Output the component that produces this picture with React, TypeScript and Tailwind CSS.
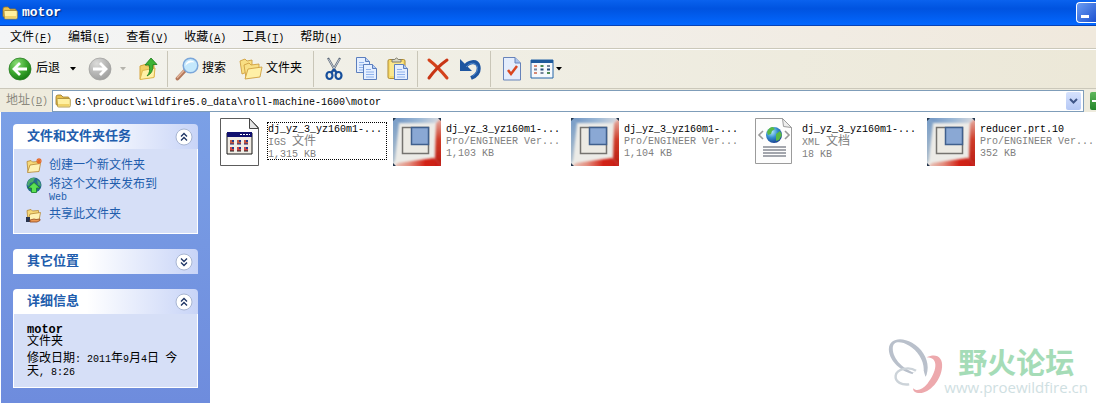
import { useId, type ReactNode } from "react";

type IconProps = { className?: string };

const menus = [
  { label: "文件", key: "F" },
  { label: "编辑", key: "E" },
  { label: "查看", key: "V" },
  { label: "收藏", key: "A" },
  { label: "工具", key: "T" },
  { label: "帮助", key: "H" },
];

const files = [
  { name: "dj_yz_3_yz160m1-...", type: "IGS 文件", size: "1,315 KB", icon: IgsIcon, focused: true },
  { name: "dj_yz_3_yz160m1-...", type: "Pro/ENGINEER Ver...", size: "1,103 KB", icon: ProeIcon },
  { name: "dj_yz_3_yz160m1-...", type: "Pro/ENGINEER Ver...", size: "1,104 KB", icon: ProeIcon },
  { name: "dj_yz_3_yz160m1-...", type: "XML 文档", size: "18 KB", icon: XmlIcon },
  { name: "reducer.prt.10", type: "Pro/ENGINEER Ver...", size: "352 KB", icon: ProeIcon },
];

const tasks = [
  { label: "创建一个新文件夹", icon: NewFolderIcon },
  { label: "将这个文件夹发布到 Web", icon: PublishIcon },
  { label: "共享此文件夹", icon: ShareIcon },
];

/* Half-width latin, full-width chinese */
function Mixed({ text }: { text: string }) {
  return (
    <>
      {text.split(/([\u4e00-\u9fff]+)/).map((part, i) =>
        i % 2 ? <span key={i} className="text-[12px] leading-none">{part}</span> : part
      )}
    </>
  );
}

function FolderIcon({ className }: IconProps) {
  return (
    <svg viewBox="0 0 16 16" className={className}>
      <path d="M1 4q0-2 2-2h3l2 2h5q1 0 1 1v7H2q-1 0-1-1z" fill="#e9c04c" stroke="#98762a" strokeWidth=".8" />
      <path d="M2 6.500q0-1 1-1h11q1.300 0 1.300 1v6q0 1.500-1 1.500H3.500q-1 0-1-1z" fill="#fff0a0" stroke="#a58631" strokeWidth=".8" />
      <path d="M3 11h11.500v2H3z" fill="#f0d268" />
    </svg>
  );
}

function OpenFolder() {
  return (
    <>
      <path d="M1 3.500l4-1 1.500 1.500 6-.500v9L2 14z" fill="#f6d878" stroke="#b58632" strokeWidth=".8" />
      <path d="M1.500 14.500L4 7l10.500-1.500-1.500 8z" fill="#fff2b4" stroke="#b58632" strokeWidth=".8" />
    </>
  );
}

function NewFolderIcon() {
  return (
    <svg viewBox="0 0 16 16" className="size-4 shrink-0">
      <OpenFolder />
      <path d="M13 0v6M10 3h6M11 1l4 4m0-4l-4 4" stroke="#e66a27" strokeWidth="1.200" />
    </svg>
  );
}

function PublishIcon() {
  return (
    <svg viewBox="0 0 16 16" className="size-4 shrink-0">
      <circle cx="8" cy="8" r="7.500" fill="#276a8c" />
      <path d="M2 4q3-4 7-3l-2 4-3 1-1 3-2-1zM11 3l3 2 1 4-3-1z" fill="#4ba96c" />
      <path d="M8 5.500l6 5.500h-3.500v4.500h-5V11H2z" fill="#5ce052" stroke="#168226" strokeWidth=".8" />
    </svg>
  );
}

function ShareIcon() {
  return (
    <svg viewBox="0 0 16 16" className="size-4 shrink-0">
      <OpenFolder />
      <path d="M0 10h4v5H0z" fill="#28344e" />
      <path d="M4 13l4-1 2 .500 4-.500v1.500l-3 1.500H4z" fill="#eb9a55" stroke="#8f481e" strokeWidth=".8" />
    </svg>
  );
}

function ArrowCircle({ back = false }: { back?: boolean }) {
  const id = useId();
  return (
    <svg viewBox="0 0 24 24" className="size-6">
      <defs>
        <radialGradient id={id} cx=".35" cy=".25" r=".85">
          <stop offset="0" stopColor={back ? "#8bdd75" : "#dcdcda"} />
          <stop offset=".55" stopColor={back ? "#3aa52d" : "#b5b5b4"} />
          <stop offset="1" stopColor={back ? "#117410" : "#9a9a99"} />
        </radialGradient>
      </defs>
      <circle cx="12" cy="12" r="11" fill={`url(#${id})`} stroke={back ? "#2b7d25" : "#a3a3a1"} strokeWidth=".8" />
      <path d={back ? "M19 12H7m5-6l-6 6 6 6" : "M5 12h12m-5-6l6 6-6 6"} fill="none" stroke="#fff" strokeWidth="2.800" />
    </svg>
  );
}

function Caret({ className = "text-black" }: IconProps) {
  return (
    <svg viewBox="0 0 6 4" className={`h-1 w-1.5 shrink-0 ${className}`}>
      <path d="M0 0h6L3 3.500z" fill="currentColor" />
    </svg>
  );
}

function UpIcon() {
  return (
    <svg viewBox="0 0 20 24" className="h-6 w-5">
      <path d="M2 9l5-1.500 2 1.500 7-1v12L2 22z" fill="#f3cf65" stroke="#d6a53c" />
      <path d="M2 22.500l2.500-9L17 11l-1 9.500z" fill="#fff1a5" stroke="#dfb64c" />
      <path d="M9 19q4-4 2-11H7l6-7 6 6.500h-4Q15.500 16 9 19z" fill="#3db335" stroke="#197a1b" strokeWidth=".8" />
    </svg>
  );
}

function SearchIcon() {
  return (
    <svg viewBox="0 0 24 24" className="size-6">
      <path d="M2.500 21.500l7.500-8" stroke="#b3775a" strokeWidth="3.800" strokeLinecap="round" />
      <path d="M2 21l7-7.500" stroke="#e6b79c" strokeWidth="1.300" />
      <circle cx="15.500" cy="8.500" r="7.300" fill="#c4e8fc" stroke="#7ba6d9" strokeWidth="1.500" />
      <path d="M10.500 9q0-5 5-5.500 3 0 4 2-6-1-9 3.500z" fill="#fff" />
    </svg>
  );
}

function FoldersIcon() {
  return (
    <svg viewBox="0 0 24 24" className="size-6" stroke="#cf9f3f" strokeWidth=".9">
      <path d="M1 4l5-2 2 2 5-1v10L3 17z" fill="#f9df83" />
      <path d="M5 8l5-2 2 2 8-1v12L7 21z" fill="#f9e086" />
      <path d="M6 22l3-10 14-2-2 10z" fill="#fff0a6" />
    </svg>
  );
}

function CutIcon() {
  return (
    <svg viewBox="0 0 20 24" className="h-6 w-5" fill="none">
      <path d="M4 1l8 14M16 1L8 15" stroke="#5b6778" strokeWidth="2.200" />
      <path d="M4.500 2l7 12M15.500 2l-7 12" stroke="#dfe4eb" strokeWidth=".8" />
      <ellipse cx="5.500" cy="18.500" rx="3" ry="3.500" stroke="#174f9c" strokeWidth="2.200" />
      <ellipse cx="14.500" cy="18.500" rx="3" ry="3.500" stroke="#174f9c" strokeWidth="2.200" />
      <path d="M7.500 15.500l2.500-3 2.500 3" stroke="#174f9c" strokeWidth="2" />
    </svg>
  );
}

function Sheet({ x, y }: { x: number; y: number }) {
  return (
    <g transform={`translate(${x} ${y})`}>
      <path d="M.5.5h9l4 4v11H.5z" fill="#e5efff" stroke="#5c7fbe" />
      <path d="M9.500.5v4h4" fill="#b7cdf2" stroke="#5c7fbe" />
      <path d="M3 5.500h5M3 8h8M3 10.500h8M3 13h8" stroke="#8fb2ec" />
    </g>
  );
}

function CopyIcon() {
  return (
    <svg viewBox="0 0 24 24" className="size-6">
      <Sheet x={1} y={0} />
      <Sheet x={8} y={7} />
    </svg>
  );
}

function PasteIcon() {
  return (
    <svg viewBox="0 0 24 24" className="size-6">
      <rect x="2" y="2.500" width="17" height="19" rx="1.500" fill="#f6d96a" stroke="#ae8b32" />
      <path d="M4 5h13v14H4z" fill="#fae78f" />
      <path d="M6 5V2.500h2.500q2-3 4 0H15V5z" fill="#d9d9ca" stroke="#7e7b69" />
      <Sheet x={8} y={7} />
    </svg>
  );
}

function DeleteIcon() {
  return (
    <svg viewBox="0 0 24 24" className="size-6" fill="none" strokeLinecap="round">
      <path d="M3 3q9 7 18 18" stroke="#d4421b" strokeWidth="3" />
      <path d="M21 3Q11 10 3 21" stroke="#c83515" strokeWidth="3" />
    </svg>
  );
}

function UndoIcon() {
  return (
    <svg viewBox="0 0 24 24" className="size-6" fill="none">
      <path d="M6 11C10 4 19 3 20.500 9.500 21.500 15 18 19 13 21" stroke="#1d55a0" strokeWidth="4" />
      <path d="M2 2v12h12l-4-4-4-4z" fill="#1d55a0" />
      <path d="M8 10c4-5 10-5 11.500 0 .5 4-1.500 7-5 9" stroke="#4f87cc" strokeWidth="1" />
    </svg>
  );
}

function PropertiesIcon() {
  return (
    <svg viewBox="0 0 20 24" className="h-6 w-5">
      <path d="M1.500.5H13l5.500 5.500v17h-17z" fill="#e4edfc" stroke="#6783ba" />
      <path d="M13 .5V6h5.500" fill="#a9c1eb" stroke="#6783ba" />
      <path d="M6 13l3 4 6-8" fill="none" stroke="#d94720" strokeWidth="2.500" />
    </svg>
  );
}

function ViewsIcon() {
  return (
    <svg viewBox="0 0 24 20" className="h-5 w-6">
      <path d="M1 1h22v18H1z" fill="#f6f9fc" stroke="#2564a8" />
      <path d="M1 1h22v3H1z" fill="#1e5a9c" />
      <path d="M4 7h3M4 14h3" stroke="#d78873" strokeWidth="2" />
      <path d="M10.500 7h3M17 14h3" stroke="#4c8a54" strokeWidth="2" />
      <path d="M17 7h3M10.500 14h3M4 10.500h3" stroke="#76869b" strokeWidth="2" />
      <path d="M10.500 10.500h3M17 10.500h3" stroke="#234b78" strokeWidth="2" />
    </svg>
  );
}

function IgsIcon() {
  return (
    <svg viewBox="0 0 48 48" className="size-12 shrink-0">
      <path d="M5.500.5h29l9 9v38h-38z" fill="#fff" stroke="#5c5c5c" />
      <path d="M34.500.5v10h9z" fill="#e5e5e5" stroke="#444" />
      <path d="M12 15h25v21H12z" fill="#f1ece4" stroke="#171717" />
      <path d="M12 14h25v5H12z" fill="#10106e" />
      <path d="M25 16.500h10" stroke="#fff" strokeDasharray="2 1" />
      {[17, 24, 31].map((x) => (
        <g key={x}>
          <path d={`M${x - 2} 22h4v4h-4z`} fill="#c65740" />
          <path d={`M${x - 2} 26h4`} stroke="#222a70" />
          <path d={`M${x - 2} 29h4v4h-4z`} fill="#d14444" />
          <path d={`M${x - 2} 33h4`} stroke="#222" />
          <path d={`M${x} 22h2v2h-2zM${x} 29h2v2h-2z`} fill="#263b8c" />
        </g>
      ))}
    </svg>
  );
}

function ProeIcon() {
  const id = useId();
  return (
    <svg viewBox="0 0 48 48" className="size-12 shrink-0">
      <defs>
        <linearGradient id={`${id}t`}>
          <stop offset="0" stopColor="#688fc0" />
          <stop offset=".55" stopColor="#9db9d6" />
          <stop offset="1" stopColor="#e3e0e0" />
        </linearGradient>
        <linearGradient id={`${id}l`} x2="0" y2="1">
          <stop offset="0" stopColor="#739ac7" />
          <stop offset="1" stopColor="#b8c4cd" />
        </linearGradient>
        <linearGradient id={`${id}r`} x2="0" y2="1">
          <stop offset="0" stopColor="#e9c4ba" />
          <stop offset=".45" stopColor="#cf3d2a" />
          <stop offset="1" stopColor="#b81810" />
        </linearGradient>
        <linearGradient id={`${id}b`}>
          <stop offset="0" stopColor="#e8d8d0" />
          <stop offset=".35" stopColor="#e48f80" />
          <stop offset=".65" stopColor="#d32216" />
          <stop offset="1" stopColor="#c31d12" />
        </linearGradient>
        <filter id={`${id}f`}>
          <feGaussianBlur stdDeviation="1.300" />
        </filter>
      </defs>
      <path d="M0 0h48v48H0z" fill="#ecebe7" />
      {/* bevel */}
      <g filter={`url(#${id}f)`}>
        <path d="M-3-3h54l-9 8H6z" fill={`url(#${id}t)`} />
        <path d="M-3-3l9 8-4 37-5 9z" fill={`url(#${id}l)`} />
        <path d="M51-3v54l-9-10 1-36z" fill={`url(#${id}r)`} />
        <path d="M-3 51l8-6 36-5 10 11z" fill={`url(#${id}b)`} />
      </g>
      <path d="M0 0h3L0 3zM45 0h3v3zM0 45v3h3z" fill="#24384f" />
      <path d="M9.500 9.500h26v26h-26z" fill="#eceae3" stroke="#75736f" strokeWidth="1.500" />
      <path d="M18.500 9.500h17v17h-17z" fill="#8aa8d4" stroke="#40608d" strokeWidth="1.500" />
    </svg>
  );
}

function XmlIcon() {
  const id = useId();
  return (
    <svg viewBox="0 0 48 48" className="size-12 shrink-0">
      <defs>
        <radialGradient id={id} cx=".35" cy=".3" r=".75">
          <stop offset="0" stopColor="#b5ecff" />
          <stop offset=".5" stopColor="#348dcf" />
          <stop offset="1" stopColor="#173d8f" />
        </radialGradient>
      </defs>
      <path d="M6.500.5h27l9 9v36h-36z" fill="#fdfdfd" stroke="#9b9b9b" />
      <path d="M33.500.5l1 8 8 1z" fill="#ededed" stroke="#9b9b9b" />
      <circle cx="25" cy="17" r="8" fill={`url(#${id})`} />
      <path d="M18 14q2-5 6-5l2 2-3 2-1 3-3 1zM27 16l4-3 2 4-3 5-3 1z" fill="#58b947" />
      <path d="M14 13l-4 4 4 4M36 13l4 4-4 4" fill="none" stroke="#999" strokeWidth="1.600" />
      <path d="M14 29h23M14 32h23M14 35h23M14 38h23" stroke="#858993" strokeWidth="1.500" />
    </svg>
  );
}

function Divider() {
  return <span className="h-9 w-px shrink-0 bg-[#c9c6b8]" />;
}

function ToolButton({ label, className, children }: { label: string; className: string; children: ReactNode }) {
  return (
    <button aria-label={label} className={`flex h-9 shrink-0 items-center ${className}`}>
      {children}
    </button>
  );
}

function Panel({ title, open = true, children }: { title: string; open?: boolean; children?: ReactNode }) {
  return (
    <section>
      <h2>
        <button
          aria-expanded={open}
          className="flex h-[25px] w-full items-center justify-between rounded-t bg-linear-to-r from-white from-40% to-[#c8d4f7] pr-[5px] pl-3.5 text-[13px] font-bold text-[#215dad]"
        >
          {title}
          <svg viewBox="0 0 18 18" className="size-[18px]">
            <circle cx="9" cy="9" r="8" fill="#fff" stroke="#a9b6d2" />
            <path
              d={open ? "M6 8.500l3-3 3 3M6 12.500l3-3 3 3" : "M6 5.500l3 3 3-3M6 9.500l3 3 3-3"}
              fill="none"
              stroke="#1d3464"
              strokeWidth="1.300"
            />
          </svg>
        </button>
      </h2>
      {open && <div className="border border-t-0 border-white bg-[#d6dff7] px-3">{children}</div>}
    </section>
  );
}

function Watermark() {
  return (
    <div className="absolute right-2 bottom-2 flex items-end">
      <svg viewBox="0 0 60 60" className="size-[58px]" fill="none">
        <path
          fillRule="evenodd"
          fill="#b9c0cb"
          d="M3 14C2 2 15-1 27 6c12 7 19 20 15 33-1 3-4 3-6 2l-6-2C15 36 4 25 3 14zm4-2c0 11 11 22 25 26l6 2c4-12-4-25-14-31C15 4 7 4 7 12z"
        />
        <path
          fillRule="evenodd"
          fill="#eda9ad"
          d="M42 21c10-5 17 0 16 10-1 14-13 27-23 27-5 0-7-2-7-5 4 4 10 1 15-5 9-11 13-27-1-27z"
        />
        <path d="M31 35c-7-5-20-2-21 5-1 7 7 10 14 9" stroke="#ccd3d9" strokeWidth="2.500" />
        <path d="M28 37l11-2 2 7-7 5-8-3z" fill="#fff" />
      </svg>
      <div className="text-center">
        <p className="font-['Noto_Sans_CJK_SC',sans-serif] text-[29px] leading-9 font-bold text-[#a5dcb7]">野火论坛</p>
        <p className="font-['Open_Sans',sans-serif] text-[15px] leading-4 text-[#cfe0e2]">www.proewildfire.cn</p>
      </div>
    </div>
  );
}

export default function App() {
  return (
    <div className="flex min-h-screen flex-col overflow-hidden bg-white font-['Liberation_Mono','Noto_Sans_CJK_SC',monospace] text-[12px] text-black">
      {/* Title bar */}
      <header className="flex h-[26px] items-center bg-linear-to-b from-[#0a62ee] via-[#0053e0] via-35% to-[#0468ff] border-b border-[#0842b5] pl-0.5 text-white">
        <FolderIcon className="mr-1 size-4" />
        <h1 className="flex-1 text-[13px] font-bold [text-shadow:1px_1px_1px_#062878]">motor</h1>
        <button aria-label="最小化" className="flex h-[21px] w-5 items-end rounded-l border border-r-0 border-white bg-linear-to-br from-[#6c9cf2] to-[#1d50d0] pb-1 pl-1">
          <span className="h-[3px] w-2 bg-white" />
        </button>
      </header>

      {/* Menu bar */}
      <nav className="flex h-[23px] items-center border-b border-[#cbc8ba] bg-linear-to-r from-[#f4f5f6] to-[#f0e9dd] pl-0.5">
        {menus.map((m) => (
          <button key={m.key} className="flex items-center px-2 pt-0.5">
            {m.label}
            <span className="text-[10px]">(<u>{m.key}</u>)</span>
          </button>
        ))}
      </nav>

      {/* Toolbar */}
      <div role="toolbar" className="flex h-10 items-center border-t border-b border-t-white border-b-[#cbc8ba] bg-linear-to-r from-[#f3f3ee] to-[#ece8d8] pl-2">
        <ToolButton label="后退" className="w-20">
          <ArrowCircle back />
          <span className="ml-1 mr-2.5">后退</span>
          <Caret />
        </ToolButton>
        <ToolButton label="前进" className="w-[50px] gap-2">
          <ArrowCircle />
          <Caret className="text-[#b5b4ad]" />
        </ToolButton>
        <ToolButton label="向上" className="w-[29px]"><UpIcon /></ToolButton>
        <Divider />
        <ToolButton label="搜索" className="ml-[7px] w-16 gap-[3px]"><SearchIcon />搜索</ToolButton>
        <ToolButton label="文件夹" className="w-[74px] gap-[3px]"><FoldersIcon />文件夹</ToolButton>
        <Divider />
        <ToolButton label="剪切" className="ml-2.5 w-[31px]"><CutIcon /></ToolButton>
        <ToolButton label="复制" className="w-[31px]"><CopyIcon /></ToolButton>
        <ToolButton label="粘贴" className="w-[31px]"><PasteIcon /></ToolButton>
        <Divider />
        <ToolButton label="删除" className="ml-2 w-8"><DeleteIcon /></ToolButton>
        <ToolButton label="撤消" className="w-8"><UndoIcon /></ToolButton>
        <Divider />
        <ToolButton label="属性" className="ml-[11px] w-7"><PropertiesIcon /></ToolButton>
        <ToolButton label="查看" className="gap-0.5"><ViewsIcon /><Caret /></ToolButton>
      </div>

      {/* Address bar */}
      <div className="flex h-[23px] items-center bg-[#eeebdd] pt-px">
        <label htmlFor="address" className="flex w-[52px] shrink-0 items-center pl-1.5 text-[#8b897e]">
          地址
          <span className="text-[10px]">(<u>D</u>)</span>
        </label>
        <div className="flex h-[22px] flex-1 items-center border border-[#7f9db9] bg-white pr-0.5 pl-0.5">
          <FolderIcon className="mr-1 size-4" />
          <input
            id="address"
            defaultValue="G:\product\wildfire5.0_data\roll-machine-1600\motor"
            className="min-w-0 flex-1 pt-0.5 text-[10px] outline-none"
          />
          <button aria-label="展开" className="flex h-[18px] w-[15px] items-center justify-center rounded-xs bg-linear-to-b from-[#d6e2fd] to-[#b5c8f5]">
            <svg viewBox="0 0 9 6" className="h-1.5 w-[9px]">
              <path d="M1 1l3.500 3.500L8 1" fill="none" stroke="#3f5688" strokeWidth="2" />
            </svg>
          </button>
        </div>
        <button aria-label="转到" className="ml-1.5 flex h-[18px] w-1.5 items-center rounded-l-xs bg-linear-to-b from-[#5fb75b] to-[#22852a]">
          <span className="ml-0.5 h-0.5 w-1 bg-white" />
        </button>
      </div>

      <div className="flex flex-1">
        {/* Task pane */}
        <aside className="ml-px flex w-[209px] shrink-0 flex-col gap-[15px] bg-linear-to-b from-[#7ba0e6] to-[#6e8cdd] p-3">
          <Panel title="文件和文件夹任务">
            <ul className="space-y-[3px] pt-[9px] pb-2.5 text-[10px] leading-3 text-[#215dad]">
              {tasks.map((task) => (
                <li key={task.label}>
                  <a href="#" className="flex gap-[7px]">
                    <task.icon />
                    <span className="w-[115px] pt-0.5"><Mixed text={task.label} /></span>
                  </a>
                </li>
              ))}
            </ul>
          </Panel>
          <Panel title="其它位置" open={false} />
          <Panel title="详细信息">
            <div className="pt-2.5 pb-2 pl-px text-[10px] leading-3">
              <p className="text-[12px] font-bold">motor</p>
              <p className="mb-1"><Mixed text="文件夹" /></p>
              <p><Mixed text="修改日期: 2011年9月4日 今天, 8:26" /></p>
            </div>
          </Panel>
        </aside>

        {/* Files */}
        <main className="relative min-w-0 flex-1 pt-1.5 pl-[5px]">
          <ul className="flex flex-wrap gap-x-[9px] gap-y-6">
            {files.map((file, i) => (
              <li key={i} className="flex w-[169px] gap-1">
                <file.icon />
                <div
                  className={`mt-1 h-[38px] w-[120px] shrink-0 border pt-px text-[10px] leading-3 whitespace-nowrap text-[#808080] ${
                    file.focused ? "border-dotted border-black" : "border-transparent"
                  }`}
                >
                  <p className="text-black">{file.name}</p>
                  <p><Mixed text={file.type} /></p>
                  <p>{file.size}</p>
                </div>
              </li>
            ))}
          </ul>
          <Watermark />
        </main>
      </div>
    </div>
  );
}
